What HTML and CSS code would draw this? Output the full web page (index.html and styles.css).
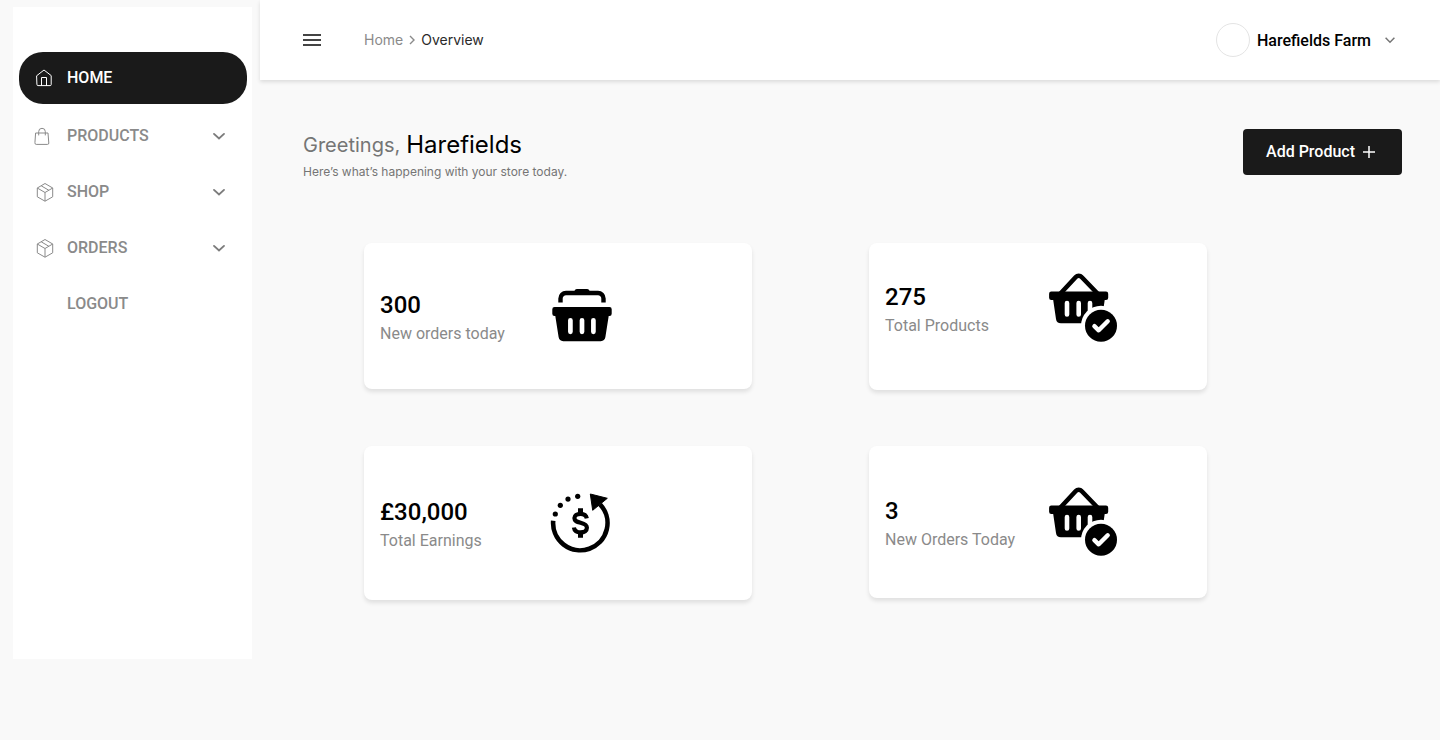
FILE: index.html
```html
<!DOCTYPE html>
<html lang="en">
<head>
<meta charset="utf-8">
<title>Overview</title>
<meta name="viewport" content="width=device-width, initial-scale=1">
<link rel="stylesheet" href="styles.css">
</head>
<body>
<svg class="defs" aria-hidden="true">
  <symbol id="chevron" viewBox="0 0 18 18"><path d="M4 6.900 9 11.500l5-4.600" fill="none" stroke="currentColor" stroke-width="1.900" stroke-linecap="round" stroke-linejoin="miter"/></symbol>
  <symbol id="box" viewBox="0 0 20 20"><g fill="none" stroke="currentColor" stroke-width="1" stroke-linejoin="round"><path d="M10 1.500 17.700 6v8.800L10 19.200l-7.700-4.400V6z"/><path d="M2.300 6 10 10.500 17.700 6M10 10.500v8.700M6.200 3.800l7.700 4.500"/></g></symbol>
  <symbol id="basket-check" viewBox="0 0 70 70">
    <path d="M11.500 20.500 26.800 4a3.900 3.900 0 0 1 5.800 0L48.500 20.500" fill="none" stroke="currentColor" stroke-width="4.600"/>
    <path d="M2.300 18.500H57a2.200 2.200 0 0 1 2.200 2.200v4a2.200 2.200 0 0 1-2.200 2.200h-1.300l-3.400 23.300H12a5 5 0 0 1-5-4.300L4.200 26.900H2.300A2.200 2.200 0 0 1 .1 24.700v-4a2.200 2.200 0 0 1 2.200-2.200z" fill="currentColor"/>
    <path d="M18 30v11.500M29.700 30v11.500M41 30v11.500" stroke="#fff" stroke-width="4.600" stroke-linecap="round"/>
    <circle cx="52" cy="52.700" r="20" fill="#fff"/>
    <circle cx="52" cy="52.700" r="16" fill="currentColor"/>
    <path d="m45.400 53.200 4.300 4.100 9-9" fill="none" stroke="#fff" stroke-width="4.400" stroke-linecap="round" stroke-linejoin="round"/>
  </symbol>
</svg>

<div class="app">
  <aside class="sidebar">
    <nav class="nav" aria-label="Main">
      <a class="nav-item active" href="#home">
        <svg class="nav-icon" viewBox="0 0 20 20"><g fill="none" stroke="currentColor" stroke-linejoin="round" stroke-linecap="round"><path d="M1.900 7.600 9 2l7.200 5.600v9a1 1 0 0 1-1 1H2.900a1 1 0 0 1-1-1z"/><path d="M6.500 17.500v-8h5v8"/></g></svg>
        <span>HOME</span>
      </a>
      <button class="nav-item" type="button">
        <svg class="nav-icon" viewBox="0 0 20 20"><g fill="none" stroke="currentColor" stroke-linejoin="round" stroke-linecap="round"><path d="M1 7h12l.8 10a1.300 1.300 0 0 1-1.300 1.400H1.200A1.300 1.300 0 0 1-.1 17z"/><path d="M3.700 9V5.600a3.300 3.300 0 0 1 6.600 0V9"/></g></svg>
        <span>PRODUCTS</span>
        <svg class="nav-chevron"><use href="#chevron"/></svg>
      </button>
      <button class="nav-item" type="button">
        <svg class="nav-icon"><use href="#box"/></svg>
        <span>SHOP</span>
        <svg class="nav-chevron"><use href="#chevron"/></svg>
      </button>
      <button class="nav-item" type="button">
        <svg class="nav-icon"><use href="#box"/></svg>
        <span>ORDERS</span>
        <svg class="nav-chevron"><use href="#chevron"/></svg>
      </button>
      <a class="nav-item no-icon" href="#logout"><span>LOGOUT</span></a>
    </nav>
  </aside>

  <div class="page">
    <header class="topbar">
      <button class="menu" type="button" aria-label="Toggle menu">
        <svg width="18" height="12" viewBox="0 0 18 12"><path d="M0 1h18M0 6h18M0 11h18" stroke="currentColor" stroke-width="2"/></svg>
      </button>
      <nav class="crumbs" aria-label="Breadcrumb">
        <a href="#home">Home</a>
        <svg width="8" height="10" viewBox="0 0 8 10"><path d="m2 1 4 4-4 4" fill="none" stroke="currentColor" stroke-width="1.400"/></svg>
        <span class="current" aria-current="page">Overview</span>
      </nav>
      <button class="account" type="button">
        <span class="avatar"></span>
        <span>Harefields Farm</span>
        <svg class="account-chevron" viewBox="0 0 12 12"><path d="m1.600 3.800 4.400 4.400 4.400-4.400" fill="none" stroke="currentColor" stroke-width="1.500"/></svg>
      </button>
    </header>

    <main>
      <section class="intro">
        <div>
          <h1><span class="hello">Greetings,</span> <span>Harefields</span></h1>
          <p>Here’s what’s happening with your store today.</p>
        </div>
        <button class="add" type="button">
          <span>Add Product</span>
          <svg width="12" height="12" viewBox="0 0 12 12"><path d="M6 0v12M0 6h12" stroke="currentColor" stroke-width="1.500"/></svg>
        </button>
      </section>

      <section class="cards" aria-label="Store statistics">
        <article class="card orders">
          <div class="stat"><strong>300</strong><span>New orders today</span></div>
          <svg class="icon-basket" viewBox="0 0 60 54">
            <path d="M8.500 13.500V9.500A5.500 5.500 0 0 1 14 4h32a5.500 5.500 0 0 1 5.500 5.500v4" fill="none" stroke="currentColor" stroke-width="4.400"/>
            <path d="M25 0h10a2.500 2.500 0 0 1 2.500 2.500V5h-15V2.500A2.500 2.500 0 0 1 25 0z" fill="currentColor"/>
            <path d="M2.500 18h55a2.200 2.200 0 0 1 2.200 2.200v4.600a2.200 2.200 0 0 1-2.200 2.200h-.8l-3.300 21.100a4.800 4.800 0 0 1-4.700 4.100H11.300a4.800 4.800 0 0 1-4.700-4.100L3.300 27h-.8A2.200 2.200 0 0 1 .3 24.800v-4.600A2.200 2.200 0 0 1 2.500 18z" fill="currentColor"/>
            <path d="M18.400 31.300v11.500M30 31.300v11.500M41.400 31.300v11.500" stroke="#fff" stroke-width="4.700" stroke-linecap="round"/>
          </svg>
        </article>
        <article class="card products">
          <div class="stat"><strong>275</strong><span>Total Products</span></div>
          <svg class="icon-check"><use href="#basket-check"/></svg>
        </article>
        <article class="card earnings">
          <div class="stat"><strong>£30,000</strong><span>Total Earnings</span></div>
          <svg class="icon-earnings" viewBox="0 0 60 60">
            <path d="M1.200 27.800A27.200 27.200 0 1 0 48 11.300" fill="none" stroke="currentColor" stroke-width="4.600"/>
            <path d="m38.300 1 17 4.300-14.600 12z" fill="currentColor" stroke="currentColor" stroke-linejoin="round"/>
            <g fill="currentColor"><circle cx="3.300" cy="21" r="2.600"/><circle cx="8.300" cy="12.300" r="2.600"/><circle cx="16" cy="6.100" r="2.600"/><circle cx="25.700" cy="3.300" r="2.600"/></g>
            <path d="M34.800 25.300c-.6-3-2.800-4.500-6.200-4.500-3.800 0-6.200 1.700-6.200 4.300 0 2.900 2.300 3.700 6.200 4.700 4 1 6.300 2 6.300 5 0 2.900-2.500 4.600-6.300 4.600-4 0-6.200-1.600-6.700-4.900" fill="none" stroke="currentColor" stroke-width="4.200"/>
            <path d="M28.500 15.300v5M28.500 39.700v5" stroke="currentColor" stroke-width="5"/>
          </svg>
        </article>
        <article class="card today">
          <div class="stat"><strong>3</strong><span>New Orders Today</span></div>
          <svg class="icon-check"><use href="#basket-check"/></svg>
        </article>
      </section>
    </main>
  </div>
</div>
</body>
</html>
```
FILE: styles.css
```css
* {
  box-sizing: border-box;
}

body {
  margin: 0;
  background: #f9f9f9;
  color: #000;
  font-family: Roboto, "Liberation Sans", sans-serif;
  font-size: 16px;
}

button {
  padding: 0;
  border: 0;
  background: none;
  color: inherit;
  font: inherit;
  cursor: pointer;
}

a {
  color: inherit;
  text-decoration: none;
}

svg {
  display: block;
  flex: none;
  overflow: visible;
}

.defs {
  position: absolute;
  width: 0;
  height: 0;
}

.app {
  display: grid;
  grid-template-columns: 260px minmax(0, 1fr);
  min-height: 100vh;
}

.sidebar {
  margin: 7px 8px 81px 13px;
  padding: 45px 5px 45px 6px;
  background: #fff;
}

.nav {
  display: flex;
  flex-direction: column;
  gap: 4px;
}

.nav-item {
  display: flex;
  align-items: center;
  gap: 12px;
  padding: 16px 19px 16px 16px;
  color: #8a8a8a;
  font-weight: 500;
  line-height: 20px;
  text-align: left;
}

.nav-item.active {
  margin-bottom: 2px;
  border-radius: 24px;
  background: #1a1a1a;
  color: #fff;
}

.nav-item.no-icon {
  padding-left: 48px;
}

.nav-icon {
  width: 20px;
  height: 20px;
}

.nav-chevron {
  width: 18px;
  height: 18px;
  margin-left: auto;
  color: #7c7c7c;
}

.topbar {
  display: flex;
  align-items: center;
  min-height: 80px;
  padding: 0 44px 0 43px;
  background: #fff;
  box-shadow: 0 2px 4px rgba(0, 0, 0, 0.12);
}

.menu {
  padding: 8px 0;
  color: #444;
}

.crumbs {
  display: flex;
  align-items: center;
  gap: 5px;
  margin-left: 43px;
  color: #8a8a8a;
  font-family: Inter, "Liberation Sans", sans-serif;
  font-size: 14px;
  line-height: 20px;
}

.crumbs .current {
  color: #2a2a2a;
}

.account {
  display: flex;
  align-items: center;
  margin-left: auto;
  font-weight: 500;
}

.avatar {
  width: 34px;
  height: 34px;
  margin-right: 7px;
  border: 1px solid #e4e4e4;
  border-radius: 50%;
}

.account-chevron {
  width: 12px;
  height: 12px;
  margin-left: 13px;
  color: #757575;
}

.intro {
  display: flex;
  align-items: flex-start;
  justify-content: space-between;
  padding: 49px 38px 0 43px;
  font-family: Inter, "Liberation Sans", sans-serif;
}

h1 {
  display: flex;
  align-items: center;
  gap: 6px;
  margin: 0;
  font-size: 24px;
  font-weight: 400;
  line-height: 32px;
}

.hello {
  color: #757575;
  font-size: 20px;
}

.intro p {
  margin: 0;
  color: #757575;
  font-size: 12px;
  line-height: 22px;
}

.add {
  display: flex;
  align-items: center;
  gap: 8px;
  padding: 13px 27px 13px 23px;
  border-radius: 4px;
  background: #1a1a1a;
  color: #fff;
  font-family: Roboto, "Liberation Sans", sans-serif;
  font-weight: 500;
  line-height: 20px;
}

.cards {
  display: grid;
  grid-template-columns: 388fr 338fr;
  align-items: start;
  gap: 56px 117px;
  padding: 60px 233px 60px 104px;
}

.card {
  display: flex;
  align-items: center;
  gap: 16px;
  padding: 43px 16px;
  border-radius: 8px;
  background: #fff;
  box-shadow: 0 3px 4px rgba(0, 0, 0, 0.1);
}

.card.products {
  padding: 30px 16px 47px;
}

.card.earnings {
  padding: 47px 16px;
}

.card.today {
  padding: 41px 16px;
}

.stat {
  display: flex;
  flex-direction: column;
  gap: 2px;
  min-width: 156px;
  padding-top: 4px;
}

.products .stat,
.today .stat {
  min-width: 148px;
}

.stat strong {
  font-size: 24px;
  font-weight: 500;
  line-height: 30px;
}

.stat span {
  color: #8a8a8a;
  line-height: 24px;
}

.icon-basket {
  width: 60px;
  height: 54px;
}

.icon-check {
  width: 70px;
  height: 70px;
}

.icon-earnings {
  width: 60px;
  height: 60px;
}
```
